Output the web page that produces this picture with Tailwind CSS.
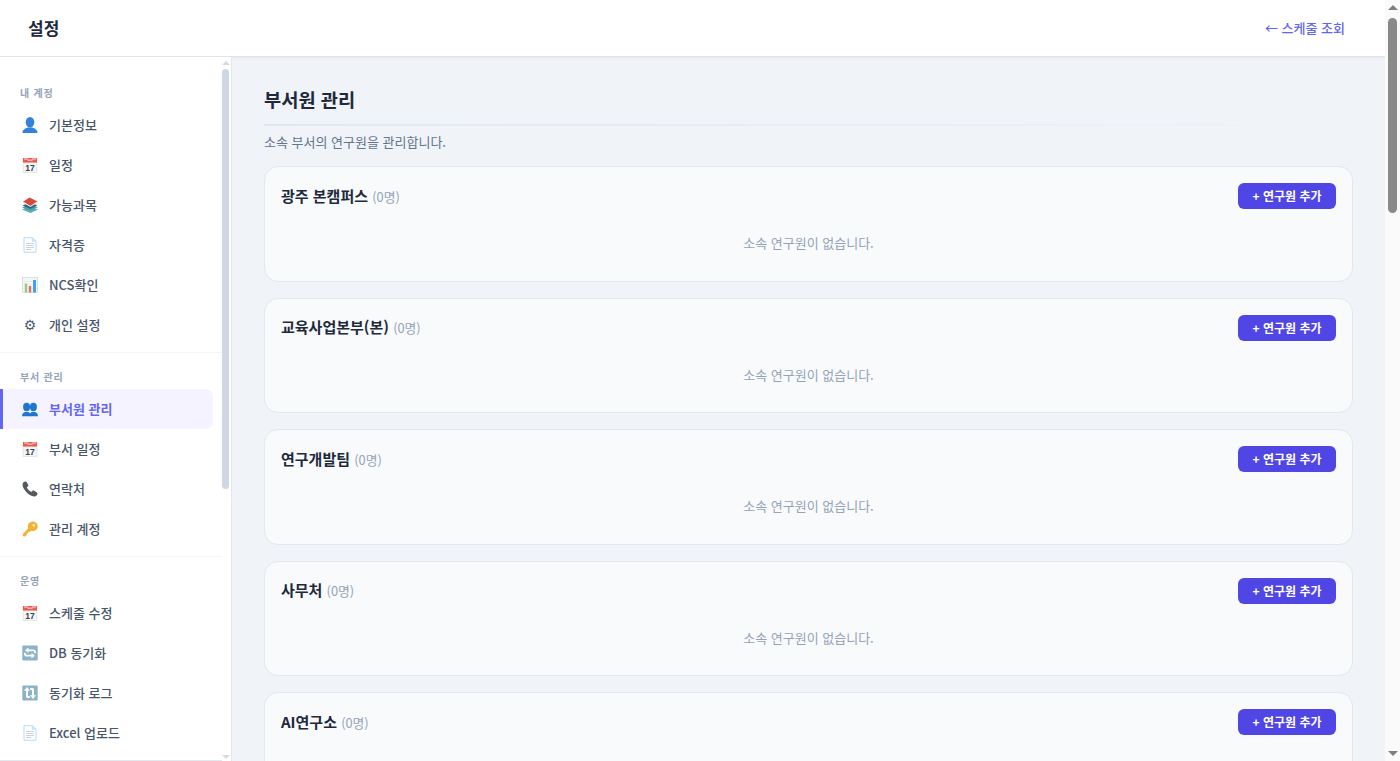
<!DOCTYPE html>
<html lang="ko">
<head>
<meta charset="utf-8">
<title>설정</title>
<script src="https://cdn.jsdelivr.net/npm/@tailwindcss/browser@4"></script>
</head>
<body class="font-['Noto_Sans_CJK_KR','Noto_Sans',sans-serif]">
<svg width="0" height="0" class="absolute">
  <defs>
    <symbol id="cal" viewBox="0 0 16 16">
      <rect x="1" y="1.500" width="14" height="14" fill="#f4f5f6" stroke="#cfd4d8" stroke-width=".5"/>
      <rect x="1" y="1" width="14" height="4.600" fill="#ee5a50"/>
      <path d="M3 1v2M5 1v2M11 1v2M13 1v2" stroke="#fff" stroke-width=".8"/>
      <rect x="5.500" y="2.600" width="5" height="1.200" fill="#fbd5d1"/>
      <text x="8" y="13.800" text-anchor="middle" font-size="8.500" font-weight="700" fill="#3c4046" font-family="Liberation Sans">17</text>
    </symbol>
    <symbol id="doc" viewBox="0 0 16 16">
      <path d="M2 .7h8.600L14 4v11.300H2z" fill="#fdfeff" stroke="#b5dcf6" stroke-width="1"/>
      <path d="M10.400.9V4.200H14" fill="#d5eafa" stroke="#b5dcf6" stroke-width=".7"/>
      <path d="M4 6.500h8M4 8.500h8M4 10.500h8M4 12.500h5.500" stroke="#c9ced3" stroke-width=".9"/>
    </symbol>
  </defs>
</svg>

<div class="flex h-[761px] w-[1400px] overflow-hidden bg-[#f0f3f8]">
  <div class="flex w-[1385px] flex-col">
    <header class="flex h-[57px] shrink-0 items-center justify-between border-b border-[#dfe4ec] bg-white pr-10 pl-[28px] shadow-[0_1px_3px_rgba(15,23,42,0.05)]">
      <h1 class="text-[17px] font-bold text-[#1e293b]">설정</h1>
      <a class="text-[13px] font-medium text-[#6366f1]">← 스케줄 조회</a>
    </header>

    <div class="flex min-h-0 flex-1">
      <aside class="relative w-[232px] shrink-0 overflow-hidden border-r border-[#e2e8f0] bg-white">
        <nav class="w-[222px] pt-[28px] text-[13px] font-medium text-[#475569]">
          <div class="flex h-[14px] items-center pl-5 text-[10px] font-semibold tracking-[0.8px] text-[#94a3b8]">내 계정</div>
          <a class="mt-[6px] flex h-10 items-center gap-[11px] pl-[22px]">
            <svg class="h-4 w-4 shrink-0" viewBox="0 0 16 16"><ellipse cx="8" cy="5.200" rx="4.300" ry="5.200" fill="#2f84da"/><path d="M.5 16c0-3.400 2.800-4.200 5-5.400h5c2.200 1.200 5 2 5 5.400z" fill="#2f84da"/></svg>
            <span>기본정보</span>
          </a>
          <a class="flex h-10 items-center gap-[11px] pl-[22px]"><svg class="h-4 w-4 shrink-0"><use href="#cal"/></svg><span>일정</span></a>
          <a class="flex h-10 items-center gap-[11px] pl-[22px]">
            <svg class="h-4 w-4 shrink-0" viewBox="0 0 16 16"><path d="M0 12.500 7 9.500l9 3-7.500 3.500z" fill="#5aa9cf"/><path d="M0 10.500 7 7.500l9 2.800-7.500 3.400z" fill="#4aa58f"/><path d="M.5 8.500 7.500 5.500l8 2.800-7 3.400z" fill="#2d5f86"/><path d="M1 4.800 7.500.6l8 3.800-7 4.400z" fill="#d9483b"/><path d="M1 4.800 8.500 8.800l7-4.400v1.300l-7 4.300-7.500-4z" fill="#f0e6d6"/></svg>
            <span>가능과목</span>
          </a>
          <a class="flex h-10 items-center gap-[11px] pl-[22px]"><svg class="h-4 w-4 shrink-0"><use href="#doc"/></svg><span>자격증</span></a>
          <a class="flex h-10 items-center gap-[11px] pl-[22px]">
            <svg class="h-4 w-4 shrink-0" viewBox="0 0 16 16"><rect x=".5" y=".5" width="15" height="15" fill="#f3f5f6" stroke="#d0d5da" stroke-width=".7"/><path d="M.5 4.500h15M.5 8h15M.5 11.500h15" stroke="#dde1e4" stroke-width=".5"/><rect x="2.800" y="6.500" width="2.400" height="9" fill="#9ccb78"/><rect x="6.800" y="9" width="2.400" height="6.500" fill="#ea6a60"/><rect x="11" y="3" width="3" height="12.500" fill="#3fa4ee"/></svg>
            <span>NCS확인</span>
          </a>
          <a class="flex h-10 items-center gap-[11px] pl-[22px]">
            <span class="flex h-4 w-4 shrink-0 items-center justify-center font-['DejaVu_Sans'] text-[14px] text-[#4b5a6e]">⚙</span>
            <span>개인 설정</span>
          </a>
          <div class="mt-[7px] h-px bg-[#f1f5f9]"></div>

          <div class="mt-[16px] flex h-[14px] items-center pl-5 text-[10px] font-semibold tracking-[0.8px] text-[#94a3b8]">부서 관리</div>
          <a class="mt-[6px] flex h-10 w-[213px] items-center gap-[11px] rounded-r-lg border-l-[3px] border-[#6366f1] bg-[#f5f3ff] pl-[19px] font-semibold text-[#6366f1]">
            <svg class="h-4 w-4 shrink-0" viewBox="0 0 16 16"><ellipse cx="4.600" cy="6" rx="3.500" ry="4.200" fill="#1f76d0"/><path d="M0 15.300c0-2.900 1.700-3.600 3-4.300h3.200C7.500 11.700 8.500 12.400 8.500 15.300z" fill="#1f76d0"/><ellipse cx="11.400" cy="6" rx="3.500" ry="4.200" fill="#1f76d0"/><path d="M7.500 15.300c0-2.900 1-3.600 2.300-4.300H13c1.300.7 3 1.400 3 4.300z" fill="#1f76d0"/></svg>
            <span>부서원 관리</span>
          </a>
          <a class="flex h-10 items-center gap-[11px] pl-[22px]"><svg class="h-4 w-4 shrink-0"><use href="#cal"/></svg><span>부서 일정</span></a>
          <a class="flex h-10 items-center gap-[11px] pl-[22px]">
            <svg class="h-4 w-4 shrink-0" viewBox="0 0 16 16"><path d="M1.500 1.300C2.800.2 4.200.2 4.800 1.200L6.300 4c.3.600 0 1.200-.5 1.500L4.800 6.200c.8 2.200 2.300 3.700 4.500 4.700l.9-1c.4-.5 1-.6 1.500-.3l3 1.600c1 .6 1.200 1.800.2 3-1.300 1.500-3.100 1.600-4.700.9C6.400 13.600 2.600 9.800 1 5.900.3 4.200.4 2.500 1.500 1.300z" fill="#555a60"/></svg>
            <span>연락처</span>
          </a>
          <a class="flex h-10 items-center gap-[11px] pl-[22px]">
            <svg class="h-4 w-4 shrink-0" viewBox="0 0 16 16"><path d="M11 .5a4.800 4.800 0 1 1-2 9.200L7.700 11H6.200v1.500H4.700V14L3 15.500H1.500L.8 14.800v-1.500L6.200 7.200A4.800 4.800 0 0 1 11 .5z" fill="#f2b233"/><circle cx="11.700" cy="4.300" r="1.300" fill="#fdf0c4"/></svg>
            <span>관리 계정</span>
          </a>
          <div class="mt-[7px] h-px bg-[#f1f5f9]"></div>

          <div class="mt-[16px] flex h-[14px] items-center pl-5 text-[10px] font-semibold tracking-[0.8px] text-[#94a3b8]">운영</div>
          <a class="mt-[6px] flex h-10 items-center gap-[11px] pl-[22px]"><svg class="h-4 w-4 shrink-0"><use href="#cal"/></svg><span>스케줄 수정</span></a>
          <a class="flex h-10 items-center gap-[11px] pl-[22px]">
            <svg class="h-4 w-4 shrink-0" viewBox="0 0 16 16"><rect x=".3" y=".5" width="15.400" height="15" rx="1" fill="#8db3c8"/><path d="M6.500 2.500 3 5.200l3.500 2.700V6.300H11c.8 0 1.100.5 1.100 1.300v.6h1.800V7c0-1.700-1.100-2.600-2.700-2.600H6.500zM9.500 13.500l3.500-2.700L9.500 8.100v1.600H5c-.8 0-1.100-.5-1.100-1.300v-.6H2.100V9c0 1.700 1.100 2.600 2.700 2.600h4.700z" fill="#fff"/></svg>
            <span>DB 동기화</span>
          </a>
          <a class="flex h-10 items-center gap-[11px] pl-[22px]">
            <svg class="h-4 w-4 shrink-0" viewBox="0 0 16 16"><rect x=".3" y=".5" width="15.400" height="15" rx="1" fill="#8db3c8"/><path d="M5 2 2 5.700h2v5.500c0 1 .7 1.700 1.700 1.700h2.100v-1.800H6V5.700h2zM11 14l3-3.700h-2V4.800c0-1-.7-1.700-1.700-1.700H8.200v1.800H10v5.400H8z" fill="#fff"/></svg>
            <span>동기화 로그</span>
          </a>
          <a class="flex h-10 items-center gap-[11px] pl-[22px]"><svg class="h-4 w-4 shrink-0"><use href="#doc"/></svg><span>Excel 업로드</span></a>
          <div class="mt-[7px] h-px bg-[#e2e8f0]"></div>
        </nav>
        <div class="absolute top-0 right-0 bottom-0 w-[9px]">
          <div class="absolute top-[4px] left-0 h-0 w-0 border-x-[4px] border-b-[4px] border-x-transparent border-b-[#d3dae6]"></div>
          <div class="absolute top-[12px] left-0 h-[420px] w-[7px] rounded bg-[#cfd7e5]"></div>
          <div class="absolute bottom-[2px] left-0 h-0 w-0 border-x-[4px] border-t-[4px] border-x-transparent border-t-[#d3dae6]"></div>
        </div>
      </aside>

      <main class="min-w-0 flex-1 overflow-hidden pt-[28px] pr-8 pl-8">
        <h2 class="text-[18.700px] leading-7 font-bold text-[#1e293b]">부서원 관리</h2>
        <div class="mt-[11px] h-[2px] w-full bg-linear-to-r from-[#e2e8f0] to-transparent"></div>
        <p class="mt-[8px] text-[13px] leading-4 text-[#64748b]">소속 부서의 연구원을 관리합니다.</p>

        <section class="mt-[16px] h-[115.500px] rounded-[14px] border border-[#e2e8f0] bg-[#f8fafc] p-4">
          <div class="flex h-[26px] items-center justify-between">
            <h3 class="text-[15px] font-semibold text-[#1e293b]">광주 본캠퍼스 <span class="text-[12.800px] font-normal text-[#94a3b8]">(0명)</span></h3>
            <button class="h-[26px] w-[98px] rounded-md bg-[#4f46e5] text-[12px] font-semibold text-white">+ 연구원 추가</button>
          </div>
          <p class="mt-[24px] text-center text-[13px] leading-5 text-[#94a3b8]">소속 연구원이 없습니다.</p>
        </section>
        <section class="mt-4 h-[115.500px] rounded-[14px] border border-[#e2e8f0] bg-[#f8fafc] p-4">
          <div class="flex h-[26px] items-center justify-between">
            <h3 class="text-[15px] font-semibold text-[#1e293b]">교육사업본부(본) <span class="text-[12.800px] font-normal text-[#94a3b8]">(0명)</span></h3>
            <button class="h-[26px] w-[98px] rounded-md bg-[#4f46e5] text-[12px] font-semibold text-white">+ 연구원 추가</button>
          </div>
          <p class="mt-[24px] text-center text-[13px] leading-5 text-[#94a3b8]">소속 연구원이 없습니다.</p>
        </section>
        <section class="mt-4 h-[115.500px] rounded-[14px] border border-[#e2e8f0] bg-[#f8fafc] p-4">
          <div class="flex h-[26px] items-center justify-between">
            <h3 class="text-[15px] font-semibold text-[#1e293b]">연구개발팀 <span class="text-[12.800px] font-normal text-[#94a3b8]">(0명)</span></h3>
            <button class="h-[26px] w-[98px] rounded-md bg-[#4f46e5] text-[12px] font-semibold text-white">+ 연구원 추가</button>
          </div>
          <p class="mt-[24px] text-center text-[13px] leading-5 text-[#94a3b8]">소속 연구원이 없습니다.</p>
        </section>
        <section class="mt-4 h-[115.500px] rounded-[14px] border border-[#e2e8f0] bg-[#f8fafc] p-4">
          <div class="flex h-[26px] items-center justify-between">
            <h3 class="text-[15px] font-semibold text-[#1e293b]">사무처 <span class="text-[12.800px] font-normal text-[#94a3b8]">(0명)</span></h3>
            <button class="h-[26px] w-[98px] rounded-md bg-[#4f46e5] text-[12px] font-semibold text-white">+ 연구원 추가</button>
          </div>
          <p class="mt-[24px] text-center text-[13px] leading-5 text-[#94a3b8]">소속 연구원이 없습니다.</p>
        </section>
        <section class="mt-4 h-[115.500px] rounded-[14px] border border-[#e2e8f0] bg-[#f8fafc] p-4">
          <div class="flex h-[26px] items-center justify-between">
            <h3 class="text-[15px] font-semibold text-[#1e293b]">AI연구소 <span class="text-[12.800px] font-normal text-[#94a3b8]">(0명)</span></h3>
            <button class="h-[26px] w-[98px] rounded-md bg-[#4f46e5] text-[12px] font-semibold text-white">+ 연구원 추가</button>
          </div>
        </section>
      </main>
    </div>
  </div>

  <div class="relative w-[15px] shrink-0 bg-[#fafafa]">
    <div class="absolute top-[5px] left-[3px] h-0 w-0 border-x-[5px] border-b-[5px] border-x-transparent border-b-[#7f7f7f]"></div>
    <div class="absolute top-[18px] left-[3px] h-[195px] w-[9px] rounded-[5px] bg-[#8a8a8a]"></div>
    <div class="absolute bottom-[5px] left-[3px] h-0 w-0 border-x-[5px] border-t-[5px] border-x-transparent border-t-[#7f7f7f]"></div>
  </div>
</div>
</body>
</html>
